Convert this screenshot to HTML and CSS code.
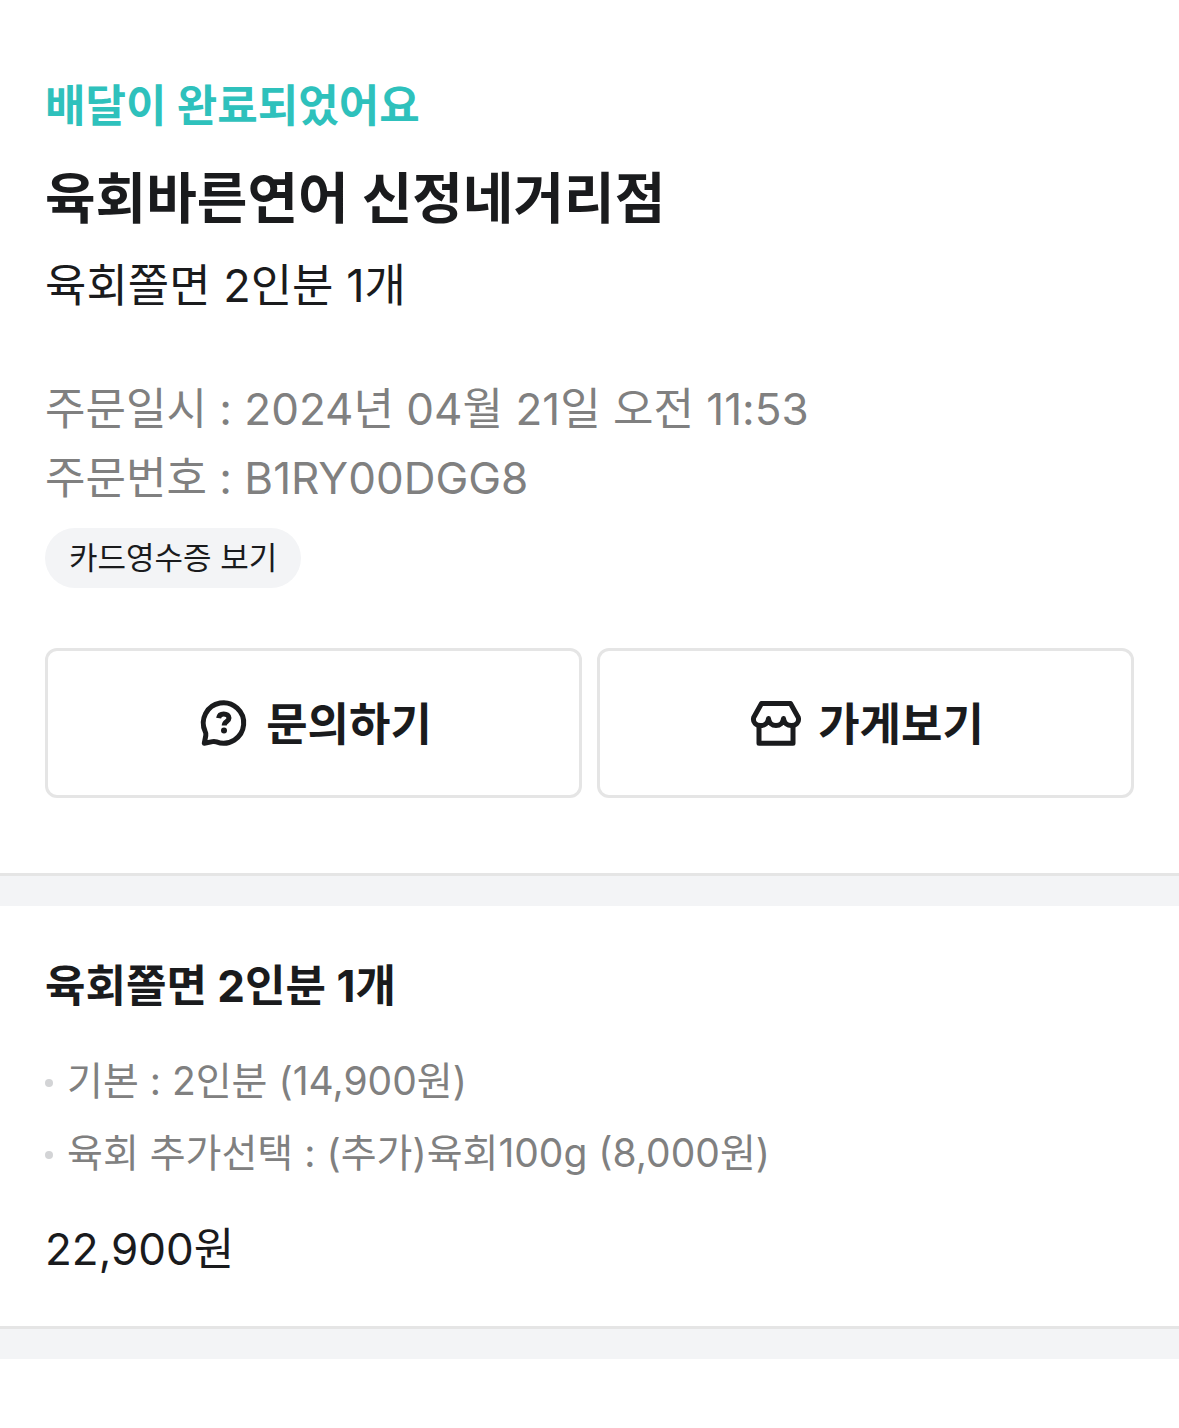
FILE: index.html
```html
<!DOCTYPE html>
<html lang="ko">
<head>
  <meta charset="UTF-8">
  <meta name="viewport" content="width=device-width, initial-scale=1.0">
  <title>주문 상세</title>
  <link rel="stylesheet" href="styles.css">
</head>
<body>
  <main>
    <section class="order">
      <p class="status">배달이 완료되었어요</p>
      <h1>육회바른연어 신정네거리점</h1>
      <p class="summary">육회쫄면 2인분 1개</p>

      <div class="order-info">
        <p>주문일시 : 2024년 04월 21일 오전 11:53</p>
        <p>주문번호 : B1RY00DGG8</p>
      </div>
      <button class="receipt-btn" type="button">카드영수증 보기</button>

      <div class="actions">
        <button class="action-btn" type="button">
          <svg class="icon" width="52" height="52" viewBox="0 0 52 52" fill="none" stroke="currentColor" stroke-width="5" stroke-linecap="round" stroke-linejoin="round" aria-hidden="true">
            <path d="M7.200 34.500A20.200 20.200 0 1 1 18.500 44.900Q16.500 44.200 14.500 44.600L6.300 46.200L7.800 38.500Q8.200 36.500 7.200 34.500Z"/>
            <path d="M20.600 21.200C21 18.400 23 16.900 25.700 16.900C28.800 16.900 31 18.500 31 21.100C31 24.700 26.200 24.400 26.200 28.600" stroke-linecap="butt"/>
            <circle cx="26" cy="33.500" r="3" fill="currentColor" stroke="none"/>
          </svg>
          <span>문의하기</span>
        </button>
        <button class="action-btn" type="button">
          <svg class="icon" width="52" height="52" viewBox="0 0 52 52" fill="none" stroke="currentColor" stroke-width="5" stroke-linecap="round" stroke-linejoin="round" aria-hidden="true">
            <path d="M11.500 6.500H40.500L48.300 20.500C49.500 25.500 46 28.600 41.500 28.600C37.500 28.600 34 26 33.500 21.500C33 26 30 28.600 26 28.600C22 28.600 19 26 18.500 21.500C18 26 14.500 28.600 10.500 28.600C6 28.600 2.500 25.500 3.700 20.500Z"/>
            <path d="M9 29V46.200H43V29"/>
          </svg>
          <span>가게보기</span>
        </button>
      </div>
    </section>
    <div class="divider"></div>

    <section class="menu">
      <h2>육회쫄면 2인분 1개</h2>
      <ul class="options">
        <li>기본 : 2인분 (14,900원)</li>
        <li>육회 추가선택 : (추가)육회100g (8,000원)</li>
      </ul>
      <p class="price">22,900원</p>
    </section>
    <div class="divider"></div>
  </main>
</body>
</html>
```

FILE: styles.css
```css
:root {
  --text: #1a1b1d;
  --muted: #808080;
  --mint: #2ec1bc;
  --line: #e5e5e5;
  --bg-gray: #f3f4f6;
}
* {
  box-sizing: border-box;
}
body {
  margin: 0;
  background: #fff;
  color: var(--text);
  font-family: Inter, "Noto Sans CJK KR", sans-serif;
  font-size: 44px;
  line-height: 70px;
}
h1, h2, p, ul {
  margin: 0;
}
button {
  font-family: inherit;
  color: inherit;
  cursor: pointer;
}

.divider {
  height: 33px;
  border-top: 3px solid var(--line);
  background: var(--bg-gray);
}

.order {
  padding: 71px 45px 75px;
}
.status {
  color: var(--mint);
  font-weight: 700;
}
h1 {
  margin-top: 17px;
  font-size: 55px;
  line-height: 80px;
  font-weight: 700;
}
.summary {
  margin-top: 13px;
  font-size: 45px;
}
.order-info {
  margin-top: 54px;
  color: var(--muted);
  line-height: 69px;
}
.receipt-btn {
  display: block;
  height: 60px;
  margin-top: 15px;
  padding: 0 24px;
  border: none;
  border-radius: 30px;
  background: var(--bg-gray);
  font-size: 31px;
  line-height: 60px;
}
.actions {
  display: grid;
  grid-template-columns: 1fr 1fr;
  gap: 15px;
  margin-top: 60px;
}
.action-btn {
  display: flex;
  align-items: center;
  justify-content: center;
  gap: 16px;
  height: 150px;
  padding: 0 6px 0 9px;
  border: 3px solid var(--line);
  border-radius: 12px;
  background: #fff;
  font-size: 45px;
  font-weight: 700;
}
.action-btn span {
  padding-bottom: 4px;
}
.icon {
  flex: none;
}

.menu {
  padding: 45px 45px 42px;
}
h2 {
  font-size: 44px;
  line-height: 70px;
  font-weight: 700;
}
.options {
  margin-top: 24px;
  padding: 0;
  list-style: none;
  color: var(--muted);
  font-size: 39px;
  line-height: 72px;
}
.options li {
  display: flex;
  align-items: center;
  gap: 14px;
}
.options li::before {
  content: "";
  flex: none;
  width: 8px;
  height: 8px;
  margin-top: 4px;
  border-radius: 50%;
  background: #d3d4d6;
}
.price {
  margin-top: 25px;
}
```
